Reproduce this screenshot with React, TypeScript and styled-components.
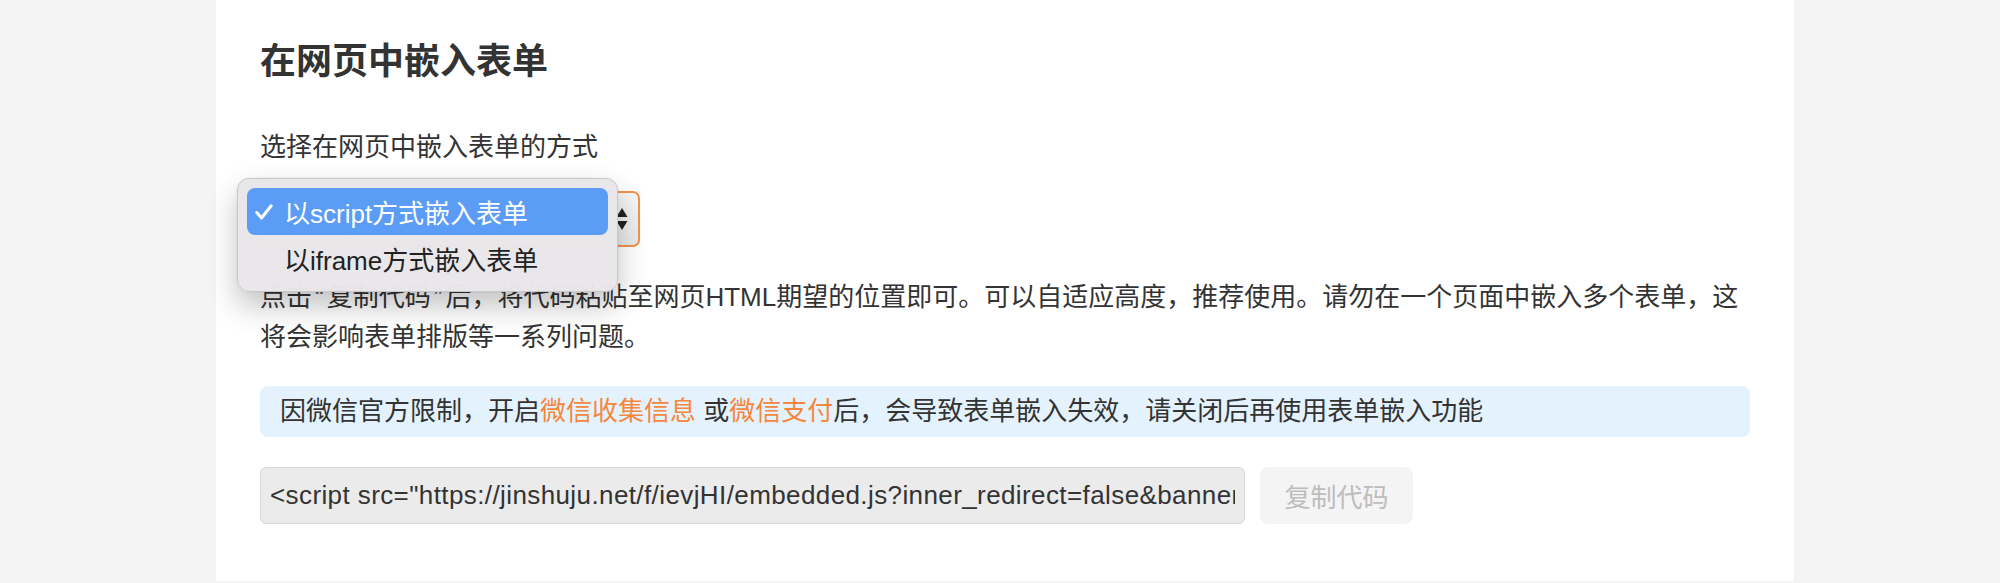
import React from 'react';
import styled, { createGlobalStyle } from 'styled-components';

const GlobalStyle = createGlobalStyle`
  html, body {
    margin: 0;
    padding: 0;
    background: #f4f4f4;
  }
  body {
    font-family: "Liberation Sans", "Noto Sans CJK SC", sans-serif;
    color: #333;
  }
`;

const Page = styled.div`
  min-height: 583px;
  padding-left: 216px;
`;

const Card = styled.section`
  width: 1578px;
  box-sizing: border-box;
  background: #fff;
  padding: 37px 44px 57px 44px;
`;

const Title = styled.h2`
  margin: 0;
  font-size: 36px;
  line-height: 50px;
  font-weight: 700;
  color: #333;
`;

const Label = styled.div`
  margin-top: 40px;
  font-size: 26px;
  line-height: 40px;
  color: #333;
`;

const SelectWrap = styled.div`
  position: relative;
  margin-top: 24px;
  width: 380px;
  height: 56px;
`;

const SelectBox = styled.div`
  box-sizing: border-box;
  height: 56px;
  display: flex;
  align-items: center;
  justify-content: space-between;
  padding: 0 10px 0 14px;
  border: 2px solid #f3924f;
  border-radius: 7px;
  background: linear-gradient(#f7f7f7, #e9e9e9);
  font-size: 26px;
  color: #333;
`;

const Menu = styled.div`
  position: absolute;
  left: -23px;
  top: -13px;
  width: 381px;
  box-sizing: border-box;
  padding: 9px;
  background: rgba(233, 231, 234, 0.98);
  border: 1px solid #c9c7ca;
  border-radius: 12px;
  box-shadow: 0 14px 30px rgba(0, 0, 0, 0.24), 0 0 2px rgba(0, 0, 0, 0.1);
  z-index: 10;
`;

const MenuItem = styled.div<{ $active?: boolean }>`
  height: 47px;
  display: flex;
  align-items: center;
  border-radius: 8px;
  padding-left: 8px;
  font-size: 26px;
  color: ${p => (p.$active ? '#fff' : '#222')};
  background: ${p => (p.$active ? '#5b9cf7' : 'transparent')};
`;

const Check = styled.span`
  width: 29px;
  display: inline-flex;
  align-items: center;
`;

const Paragraph = styled.p`
  margin: 30px 0 0 0;
  font-size: 26px;
  line-height: 40px;
  color: #333;
`;

const Quote = styled.span`
  padding: 0 3px;
  color: #666;
`;

const Notice = styled.div`
  margin-top: 29px;
  padding: 6px 20px;
  background: #e4f2fd;
  border-radius: 8px;
  font-size: 26px;
  line-height: 39px;
  color: #333;
`;

const Highlight = styled.span`
  color: #f5873d;
`;

const CodeRow = styled.div`
  margin-top: 30px;
  display: flex;
  gap: 15px;
`;

const CodeInput = styled.input`
  width: 985px;
  height: 57px;
  box-sizing: border-box;
  padding: 0 9px;
  border: 1px solid #d8d8d8;
  border-radius: 6px;
  background: #ebebeb;
  font-family: "Liberation Sans", "Noto Sans CJK SC", sans-serif;
  font-size: 26px;
  letter-spacing: 0.4px;
  color: #333;
  outline: none;
`;

const CopyButton = styled.button`
  width: 153px;
  height: 57px;
  border: none;
  border-radius: 8px;
  background: #f4f4f4;
  font-family: "Liberation Sans", "Noto Sans CJK SC", sans-serif;
  font-size: 26px;
  color: #bdbdbd;
`;

const embedCode =
  '<script src="https://jinshuju.net/f/ievjHI/embedded.js?inner_redirect=false&banner=show&background=white&height=1000"></script>';

export default function App() {
  return (
    <Page>
      <GlobalStyle />
      <Card>
        <Title>在网页中嵌入表单</Title>
        <Label>选择在网页中嵌入表单的方式</Label>
        <SelectWrap>
          <SelectBox>
            <span>以script方式嵌入表单</span>
            <svg width="12" height="26" viewBox="0 0 12 26">
              <path d="M6 2 L11.5 11 L0.5 11 Z" fill="#222" />
              <path d="M6 24 L11.5 15 L0.5 15 Z" fill="#222" />
            </svg>
          </SelectBox>
          <Menu>
            <MenuItem $active>
              <Check>
                <svg width="18" height="16" viewBox="0 0 18 16">
                  <path d="M1.8 8.5 L6.5 14 L16.2 1.8" fill="none" stroke="#fff" strokeWidth="3" strokeLinecap="round" strokeLinejoin="round" />
                </svg>
              </Check>
              以script方式嵌入表单
            </MenuItem>
            <MenuItem>
              <Check />
              以iframe方式嵌入表单
            </MenuItem>
          </Menu>
        </SelectWrap>
        <Paragraph>
          点击<Quote>“</Quote>复制代码<Quote>”</Quote>后，将代码粘贴至网页HTML期望的位置即可。可以自适应高度，推荐使用。请勿在一个页面中嵌入多个表单，这
          <br />
          将会影响表单排版等一系列问题。
        </Paragraph>
        <Notice>
          因微信官方限制，开启<Highlight>微信收集信息</Highlight> 或<Highlight>微信支付</Highlight>后，会导致表单嵌入失效，请关闭后再使用表单嵌入功能
        </Notice>
        <CodeRow>
          <CodeInput readOnly value={embedCode} />
          <CopyButton>复制代码</CopyButton>
        </CodeRow>
      </Card>
    </Page>
  );
}
